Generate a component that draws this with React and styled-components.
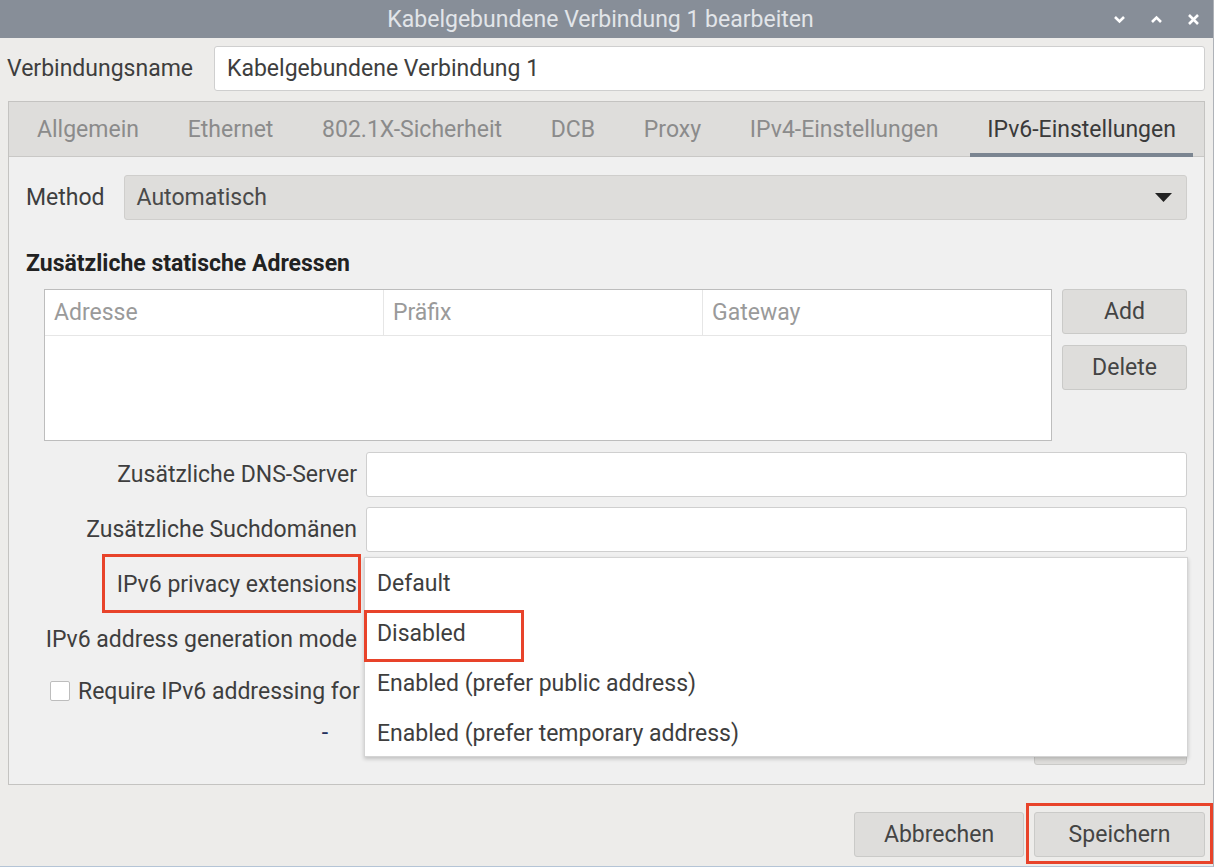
import styled, { createGlobalStyle } from "styled-components";

const GlobalStyle = createGlobalStyle`
  html, body {
    margin: 0;
    padding: 0;
    background: #edecea;
  }
  body {
    font-family: Roboto, "Liberation Sans", sans-serif;
  }
`;

const tabs = [
  "Allgemein",
  "Ethernet",
  "802.1X-Sicherheit",
  "DCB",
  "Proxy",
  "IPv4-Einstellungen",
  "IPv6-Einstellungen",
];

const privacyOptions = [
  "Default",
  "Disabled",
  "Enabled (prefer public address)",
  "Enabled (prefer temporary address)",
];

const App = () => {
  return (
    <>
      <GlobalStyle />
      <Window>
        <TitleBar>
          <span />
          <Title>Kabelgebundene Verbindung 1 bearbeiten</Title>
          <Controls>
            <svg width="13" height="9" viewBox="0 0 13 9">
              <polyline points="2,2 6.5,6.5 11,2" fill="none" stroke="#fff" strokeWidth="2.6" />
            </svg>
            <svg width="13" height="9" viewBox="0 0 13 9">
              <polyline points="2,7 6.5,2.5 11,7" fill="none" stroke="#fff" strokeWidth="2.6" />
            </svg>
            <svg width="13" height="13" viewBox="0 0 13 13">
              <path d="M2 2 L11 11 M11 2 L2 11" stroke="#fff" strokeWidth="2.6" />
            </svg>
          </Controls>
        </TitleBar>

        <NameRow>
          <NameLabel>Verbindungsname</NameLabel>
          <TextInput>Kabelgebundene Verbindung 1</TextInput>
        </NameRow>

        <Notebook>
          <TabBar>
            {tabs.map((t) => (
              <Tab key={t} $active={t === "IPv6-Einstellungen"}>
                {t}
              </Tab>
            ))}
          </TabBar>

          <Content>
            <MethodRow>
              <span>Method</span>
              <Combo>
                <span>Automatisch</span>
                <svg width="17" height="10" viewBox="0 0 17 10">
                  <polygon points="0,0 17,0 8.5,9" fill="#222" />
                </svg>
              </Combo>
            </MethodRow>

            <Heading>Zusätzliche statische Adressen</Heading>

            <AddressSection>
              <AddressTable>
                <TableHeader>
                  <HeaderCell $width="339px">Adresse</HeaderCell>
                  <HeaderCell $width="319px">Präfix</HeaderCell>
                  <HeaderCell $last>Gateway</HeaderCell>
                </TableHeader>
              </AddressTable>
              <SideButtons>
                <Button $width="125px">Add</Button>
                <Button $width="125px">Delete</Button>
              </SideButtons>
            </AddressSection>

            <FormGrid>
              <FieldLabel>Zusätzliche DNS-Server</FieldLabel>
              <TextInput />

              <FieldLabel>Zusätzliche Suchdomänen</FieldLabel>
              <TextInput />

              <FieldLabel>
                IPv6 privacy extensions
                <Annotation $left="76px" $top="-8px" $width="259px" $height="59px" />
              </FieldLabel>
              <FieldCell>
                <Combo />
                <Popup>
                  {privacyOptions.map((o) => (
                    <PopupItem key={o}>{o}</PopupItem>
                  ))}
                  <Annotation $left="-1px" $top="52px" $width="160px" $height="52px" />
                </Popup>
              </FieldCell>

              <FieldLabel>IPv6 address generation mode</FieldLabel>
              <Combo />

              <CheckRow>
                <CheckBox />
                <span>Require IPv6 addressing for</span>
              </CheckRow>

              <FieldLabel $top>-</FieldLabel>
              <ButtonCell>
                <Button $width="153px" />
              </ButtonCell>
            </FormGrid>
          </Content>
        </Notebook>

        <ButtonBar>
          <Button $width="170px">Abbrechen</Button>
          <AnnotatedButton>
            <Button $width="171px">Speichern</Button>
            <Annotation $left="-8px" $top="-9px" $width="187px" $height="61px" />
          </AnnotatedButton>
        </ButtonBar>
      </Window>
    </>
  );
};

export default App;

const Window = styled.div`
  width: 1214px;
  height: 867px;
  box-sizing: border-box;
  display: flex;
  flex-direction: column;
  background: #edecea;
  color: #3e3e3e;
  font-size: 23px;
  border-right: 1px solid #aeb2b8;
  border-bottom: 1px solid #b4c4d6;
  overflow: hidden;
`;

const TitleBar = styled.div`
  height: 38px;
  flex: none;
  background: #878e98;
  display: grid;
  grid-template-columns: 1fr auto 1fr;
  align-items: center;
`;

const Title = styled.div`
  color: #e2e5e9;
  font-size: 23px;
  padding-right: 12px;
`;

const Controls = styled.div`
  justify-self: end;
  display: flex;
  align-items: center;
  gap: 24px;
  padding-right: 13px;
`;

const NameRow = styled.div`
  display: flex;
  align-items: center;
  gap: 18px;
  padding: 8px 8px 0 7px;
`;

const NameLabel = styled.span`
  flex: none;
  width: 189px;
  white-space: nowrap;
`;

const TextInput = styled.div`
  flex: 1;
  height: 45px;
  box-sizing: border-box;
  background: #fff;
  border: 1px solid #cfcfcf;
  border-radius: 3px;
  padding: 0 12px;
  display: flex;
  align-items: center;
  color: #3e3e3e;
`;

const Notebook = styled.div`
  margin: 10px 8px 0 8px;
  height: 684px;
  box-sizing: border-box;
  border: 1px solid #c4c3c1;
  display: flex;
  flex-direction: column;
`;

const TabBar = styled.div`
  height: 55px;
  box-sizing: border-box;
  flex: none;
  background: #dedddb;
  border-bottom: 1px solid #c9c8c6;
  display: flex;
  justify-content: space-between;
  padding: 0 11px;
`;

const Tab = styled.div`
  display: flex;
  align-items: center;
  padding: 0 17px;
  color: ${(props) => (props.$active ? "#3a3a3a" : "#8b8b8b")};
  box-shadow: ${(props) => (props.$active ? "inset 0 -4px 0 #7b8591" : "none")};
  margin-bottom: -1px;
`;

const Content = styled.div`
  flex: 1;
  background: #f0f0f0;
  padding: 18px 17px 0 17px;
  display: flex;
  flex-direction: column;
`;

const MethodRow = styled.div`
  display: flex;
  align-items: center;
  gap: 19px;
`;

const Combo = styled.div`
  flex: 1;
  height: 45px;
  box-sizing: border-box;
  background: #dedddb;
  border: 1px solid #cfcecc;
  border-radius: 3px;
  padding: 0 14px 0 12px;
  display: flex;
  align-items: center;
  justify-content: space-between;
  color: #4a4a4a;
`;

const Heading = styled.div`
  margin-top: 31px;
  line-height: 26px;
  font-size: 23px;
  font-weight: 700;
  color: #222;
`;

const AddressSection = styled.div`
  margin-top: 12px;
  margin-left: 18px;
  display: flex;
  gap: 10px;
`;

const AddressTable = styled.div`
  flex: 1;
  height: 152px;
  box-sizing: border-box;
  background: #fff;
  border: 1px solid #bdbdbd;
`;

const TableHeader = styled.div`
  display: flex;
  height: 45px;
  border-bottom: 1px solid #e6e6e6;
`;

const HeaderCell = styled.div`
  width: ${(props) => props.$width || "auto"};
  flex: ${(props) => (props.$last ? 1 : "none")};
  box-sizing: border-box;
  border-right: ${(props) => (props.$last ? "none" : "1px solid #e6e6e6")};
  padding-left: 9px;
  display: flex;
  align-items: center;
  color: #9a9a9a;
`;

const SideButtons = styled.div`
  display: flex;
  flex-direction: column;
  gap: 11px;
`;

const Button = styled.div`
  width: ${(props) => props.$width};
  height: 45px;
  box-sizing: border-box;
  background: #dedddb;
  border: 1px solid #cacac8;
  border-radius: 3px;
  display: flex;
  align-items: center;
  justify-content: center;
  color: #444;
`;

const FormGrid = styled.div`
  margin-top: 11px;
  display: grid;
  grid-template-columns: 331px 1fr;
  grid-template-rows: 45px 45px 45px 45px 38px 45px;
  column-gap: 9px;
  row-gap: 10px;
`;

const FieldLabel = styled.div`
  position: relative;
  display: flex;
  align-items: ${(props) => (props.$top ? "flex-start" : "center")};
  justify-content: flex-end;
  padding-right: ${(props) => (props.$top ? "29px" : "0")};
  line-height: 26px;
  color: ${(props) => (props.$top ? "#24305e" : "#3e3e3e")};
  white-space: nowrap;
`;

const FieldCell = styled.div`
  position: relative;
  display: flex;
`;

const Popup = styled.div`
  position: absolute;
  top: -5px;
  left: -2px;
  right: -1px;
  height: 200px;
  box-sizing: border-box;
  background: #fff;
  border: 1px solid #d4d4d4;
  box-shadow: 0 2px 4px rgba(0, 0, 0, 0.2);
  z-index: 5;
`;

const PopupItem = styled.div`
  height: 50px;
  display: flex;
  align-items: center;
  padding-left: 12px;
  color: #3e3e3e;
`;

const Annotation = styled.div`
  position: absolute;
  left: ${(props) => props.$left};
  top: ${(props) => props.$top};
  width: ${(props) => props.$width};
  height: ${(props) => props.$height};
  box-sizing: border-box;
  border: 3px solid #e8432a;
  z-index: 6;
  pointer-events: none;
`;

const CheckRow = styled.div`
  grid-column: 1 / -1;
  display: flex;
  align-items: center;
  gap: 8px;
  padding-left: 24px;
  white-space: nowrap;
`;

const CheckBox = styled.div`
  flex: none;
  width: 20px;
  height: 20px;
  box-sizing: border-box;
  background: #fff;
  border: 1px solid #bdbdbd;
  border-radius: 2px;
`;

const ButtonCell = styled.div`
  display: flex;
  justify-content: flex-end;
`;

const ButtonBar = styled.div`
  display: flex;
  justify-content: flex-end;
  gap: 10px;
  padding: 27px 8px 0 0;
`;

const AnnotatedButton = styled.div`
  position: relative;
`;
